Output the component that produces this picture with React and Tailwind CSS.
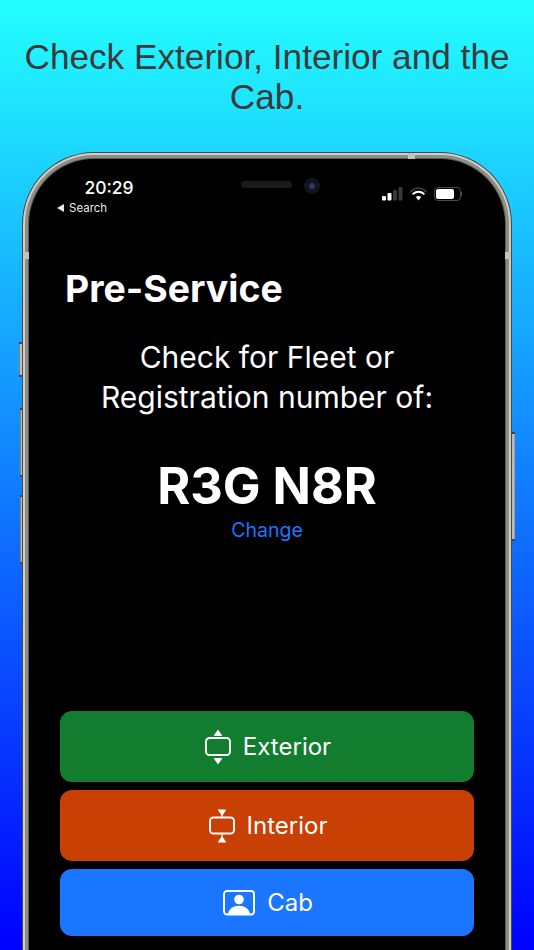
const inter = { fontFamily: "Inter, sans-serif" };

const SideButton = ({ className }) => (
  <div className={`absolute w-[4px] bg-gradient-to-r from-[#6b6b66] via-[#d4d4cc] to-[#8c8c86] border-y-2 border-[#444] ${className}`} />
);

const ExteriorIcon = () => (
  <svg width="26" height="36" viewBox="0 0 26 36" fill="none">
    <rect x="1" y="9" width="24" height="17" rx="3.5" stroke="white" strokeWidth="1.9" />
    <path d="M13 1.500 L16.500 6.500 H9.500 Z M13 34.500 L16.500 29.500 H9.500 Z" fill="white" stroke="white" strokeWidth="1.2" strokeLinejoin="round" />
  </svg>
);

const InteriorIcon = () => (
  <svg width="26" height="36" viewBox="0 0 26 36" fill="none">
    <rect x="1" y="9.5" width="24" height="16" rx="3.5" stroke="white" strokeWidth="1.9" />
    <path d="M9.500 2 H16.500 L13 7 Z M9.500 34 H16.500 L13 29 Z" fill="white" stroke="white" strokeWidth="1.2" strokeLinejoin="round" />
    <path d="M13 6 V9.500 M13 25.500 V29" stroke="white" strokeWidth="1.2" />
  </svg>
);

const CabIcon = () => (
  <svg width="32" height="26" viewBox="0 0 32 26" fill="none">
    <rect x="1" y="1" width="30" height="23.5" rx="3" stroke="white" strokeWidth="1.9" />
    <circle cx="16" cy="9.5" r="4.8" fill="white" />
    <path d="M5 24 C6 18.5 10.5 15.8 16 15.8 C21.5 15.8 26 18.5 27 24 Z" fill="white" />
  </svg>
);

const StatusIcons = () => (
  <div className="flex items-center self-start gap-[7px] mt-[28px] mr-[43px]">
    <svg width="21" height="14" viewBox="0 0 21 14">
      <rect x="0" y="9" width="4" height="4.500" rx="1" fill="white" />
      <rect x="5.500" y="6" width="4" height="7.500" rx="1" fill="white" />
      <rect x="11" y="3" width="4" height="10.500" rx="1" fill="#3a3a3a" />
      <rect x="16.500" y="0" width="4" height="13.500" rx="1" fill="#3a3a3a" />
    </svg>
    <svg width="17" height="14" viewBox="0 0 17 14" fill="none" strokeLinecap="round">
      <path d="M1 4.500 C5.500 0 11.500 0 16 4.500" stroke="#3a3a3a" strokeWidth="1.800" />
      <path d="M3.300 6.800 C6.300 4 10.700 4 13.700 6.800" stroke="white" strokeWidth="2" />
      <path d="M8.500 13.500 L5.800 10 C7.300 8.700 9.700 8.700 11.200 10 Z" fill="white" />
    </svg>
    <div className="flex items-center">
      <div className="w-[27px] h-[14px] rounded-[4px] border border-[#4a4a4a] p-px">
        <div className="w-[18px] h-full rounded-[2px] bg-white" />
      </div>
      <div className="w-[1.5px] h-[4px] bg-[#555] rounded-r-sm" />
    </div>
  </div>
);

const ActionButton = ({ color, height, icon, label }) => (
  <button className={`w-full flex items-center justify-center gap-[12px] pl-[2px] rounded-[12px] text-white text-[24px] ${color} ${height}`}>
    {icon}
    <span>{label}</span>
  </button>
);

const App = () => {
  return (
    <div className="relative h-[950px] w-[534px] overflow-hidden bg-linear-to-b/srgb from-[#22ffff] to-[#0000ff]">
      <h1
        className="h-[152px] pt-[37px] px-4 text-center text-[35.200px] leading-[40px] text-[#3a3a3a]"
        style={{ fontFamily: '"Liberation Sans", Arial, sans-serif' }}
      >
        Check Exterior, Interior and the Cab.
      </h1>

      <SideButton className="left-[19px] top-[342px] h-[35px]" />
      <SideButton className="left-[20px] top-[408px] h-[69px]" />
      <SideButton className="left-[20px] top-[495px] h-[69px]" />
      <SideButton className="left-[511px] top-[432px] h-[109px]" />

      <div className="relative mx-[22px] h-[900px] rounded-[72px] bg-[#4a4a48] p-px">
        <span className="absolute left-px top-[100px] w-[6px] h-[7px] bg-[#c4c4bc]" />
        <span className="absolute right-px top-[100px] w-[6px] h-[7px] bg-[#c4c4bc]" />
        <span className="absolute left-[386px] top-px w-[7px] h-[6px] bg-[#c4c4bc]" />
        <div className="h-full rounded-[71px] bg-[#cfcfc7] p-[2px]">
          <div className="h-full rounded-[69px] bg-[#8e8e88] p-[3px]">
            <div className="h-full rounded-[66px] bg-[#5a5a56] p-px">
              <main className="h-full rounded-[65px] bg-black overflow-hidden" style={inter}>
                <div className="relative flex justify-between h-[90px] text-white">
                  <div className="pl-[28px] pt-[17px]">
                    <p className="text-[17.500px] leading-[24px] font-medium text-center w-[104px]">20:29</p>
                    <p className="text-[11.500px] leading-[16px] text-[#e8e8e8] flex items-center gap-[5px]">
                      <svg width="7" height="8" viewBox="0 0 7 8">
                        <path d="M0 4 L7 0 V8 Z" fill="#e8e8e8" />
                      </svg>
                      Search
                    </p>
                  </div>
                  <div className="absolute left-[212px] top-[22px] w-[51px] h-[7px] rounded-full bg-[#1a1a1a]" />
                  <div className="absolute left-[275px] top-[19px] w-[16px] h-[16px] rounded-full bg-[#14141c] flex items-center justify-center">
                    <div className="w-[6px] h-[6px] rounded-full bg-[#27356e]" />
                  </div>
                  <StatusIcons />
                </div>

                <div className="px-[36px] text-[37.400px] leading-[44px] font-bold text-white mt-[18px]">Pre-Service</div>

                <p className="mt-[26px] text-center text-[30px] leading-[40px] text-white">
                  Check for Fleet or
                  <br />
                  Registration number of:
                </p>

                <p className="mt-[39px] text-center text-[50.400px] leading-[60px] font-bold text-white">R3G N8R</p>
                <p className="mt-[1px] text-center text-[19.500px] leading-[26px] text-[#1a75ff]">Change</p>

                <div className="mt-[168px] px-[31px] flex flex-col gap-[8px]">
                  <ActionButton color="bg-[#127d2f]" height="h-[71px]" icon={<ExteriorIcon />} label="Exterior" />
                  <ActionButton color="bg-[#c84003]" height="h-[71px]" icon={<InteriorIcon />} label="Interior" />
                  <ActionButton color="bg-[#1a75ff]" height="h-[67px]" icon={<CabIcon />} label="Cab" />
                </div>
              </main>
            </div>
          </div>
        </div>
      </div>
    </div>
  );
};

export default App;
